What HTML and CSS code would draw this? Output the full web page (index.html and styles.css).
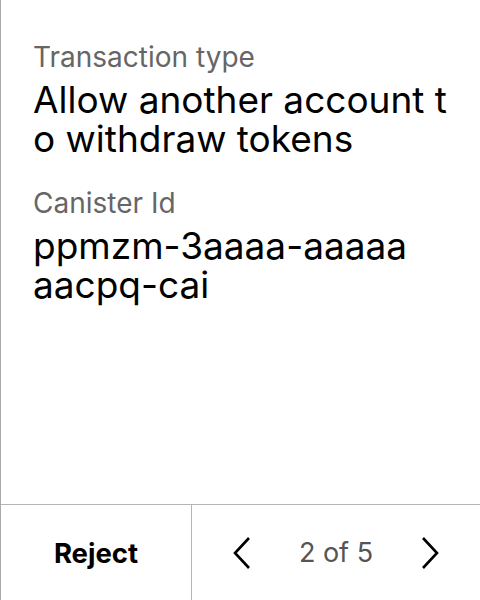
FILE: index.html
```html
<!DOCTYPE html>
<html>
<head>
<meta charset="utf-8">
<link rel="stylesheet" href="styles.css">
</head>
<body>
<div class="screen">
  <main class="content">
    <div class="field">
      <div class="label">Transaction type</div>
      <div class="value">Allow another account t<br>o withdraw tokens</div>
    </div>
    <div class="field">
      <div class="label">Canister Id</div>
      <div class="value">ppmzm-3aaaa-aaaaa<br>aacpq-cai</div>
    </div>
  </main>
  <footer class="bar">
    <button class="reject">Reject</button>
    <div class="pager">
      <button class="nav" aria-label="Previous">
        <svg width="20" height="32" viewBox="0 0 20 32"><path d="M17 1 L3 16 L17 31" fill="none" stroke="#000" stroke-width="2.6"/></svg>
      </button>
      <span class="count">2 of 5</span>
      <button class="nav" aria-label="Next">
        <svg width="20" height="32" viewBox="0 0 20 32"><path d="M3 1 L17 16 L3 31" fill="none" stroke="#000" stroke-width="2.6"/></svg>
      </button>
    </div>
  </footer>
</div>
</body>
</html>
```
FILE: styles.css
```css
html, body {
  margin: 0;
  padding: 0;
  background: #fff;
}
.screen {
  width: 480px;
  height: 600px;
  box-sizing: border-box;
  border-left: 1px solid #a9a9a9;
  display: flex;
  flex-direction: column;
  font-family: Inter, "Noto Sans", sans-serif;
  color: #000;
}
.content {
  flex: 1;
  padding: 40px 10px 0 32px;
  display: flex;
  flex-direction: column;
  gap: 28px;
}
.label {
  font-size: 28px;
  line-height: 34px;
  color: #666;
}
.value {
  font-size: 37px;
  line-height: 39px;
  margin-top: 6px;
  white-space: nowrap;
}
.bar {
  height: 96px;
  border-top: 1px solid #b5b5b5;
  display: flex;
  box-sizing: border-box;
}
.reject {
  width: 191px;
  border: none;
  border-right: 1px solid #b5b5b5;
  background: #fff;
  font-family: inherit;
  font-size: 27.5px;
  font-weight: 700;
  color: #000;
  padding: 0;
}
.pager {
  flex: 1;
  display: flex;
  align-items: center;
  justify-content: space-between;
  padding: 0 26px;
}
.nav {
  width: 48px;
  height: 48px;
  border: none;
  background: none;
  padding: 0;
  display: flex;
  align-items: center;
  justify-content: center;
}
.count {
  font-size: 27px;
  color: #555;
}
```
